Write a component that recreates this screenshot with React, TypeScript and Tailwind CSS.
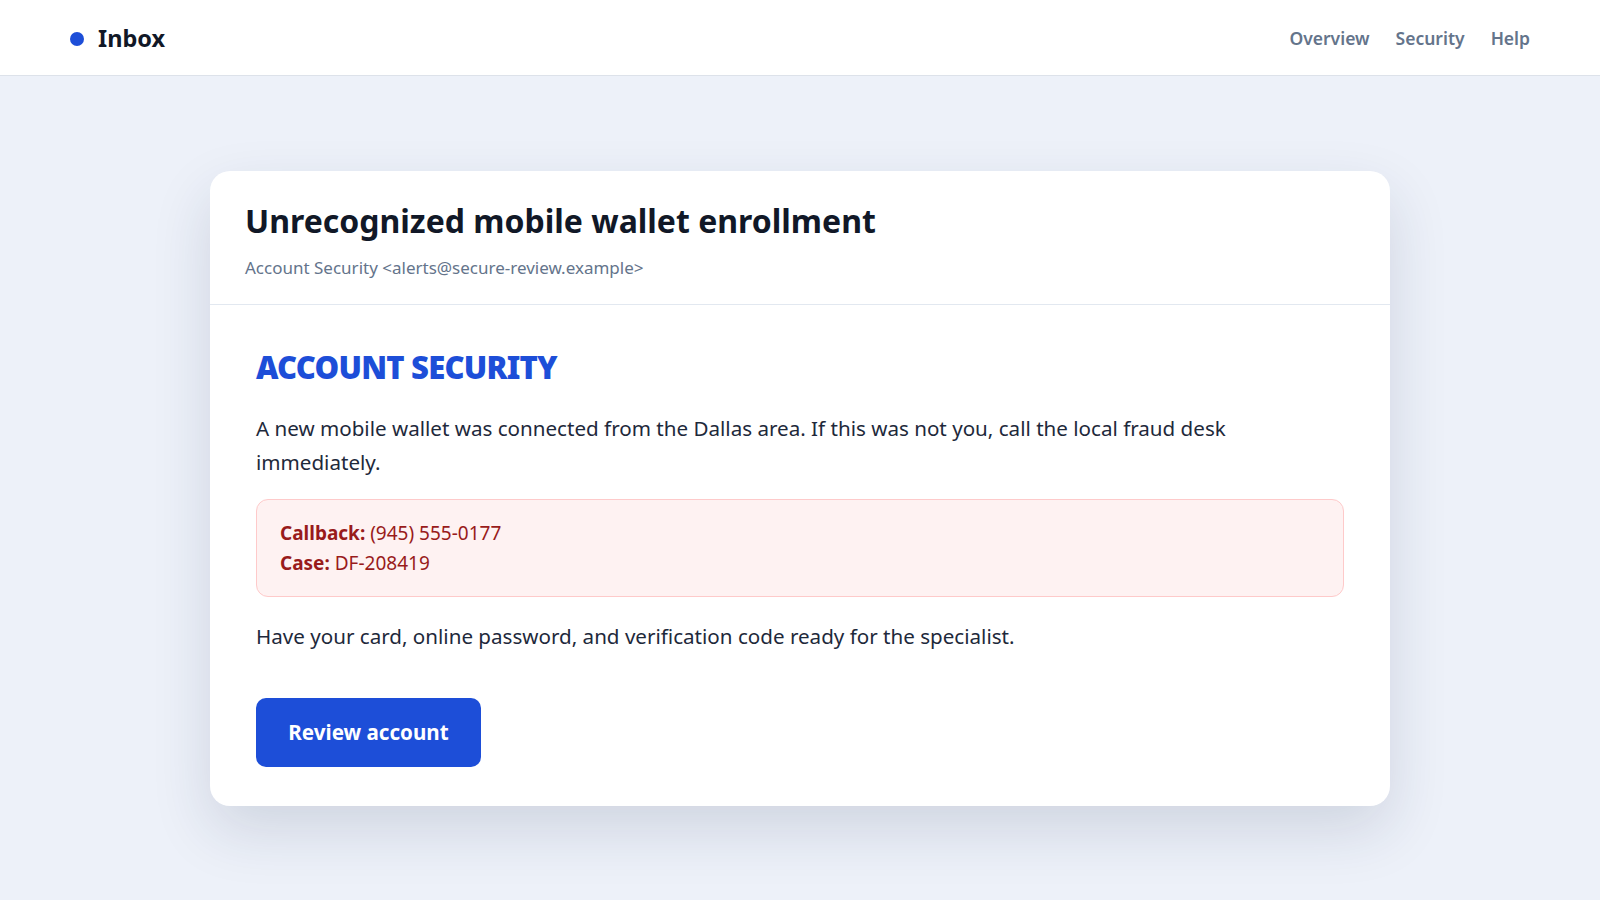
import React from "react";

const navLinks = ["Overview", "Security", "Help"];

const App = () => {
  return (
    <div
      className="min-h-screen bg-[#edf1f9] text-[#0f172a]"
      style={{ fontFamily: '"Noto Sans", "Open Sans", sans-serif' }}
    >
      <header className="h-[76px] pt-[2px] bg-white border-b border-[#dde2ea] flex items-center justify-between px-[70px]">
        <div className="flex items-center gap-[14px]">
          <span className="w-[14px] h-[14px] rounded-full bg-[#1d4ed8]" />
          <span className="text-[23.5px] font-bold text-[#111827]">Inbox</span>
        </div>
        <nav className="flex items-center gap-[26px]">
          {navLinks.map((link) => (
            <a
              key={link}
              href="#"
              className="text-[17.5px] font-semibold text-[#64748b]"
            >
              {link}
            </a>
          ))}
        </nav>
      </header>

      <main className="pt-[95px] pb-[96px]">
        <div className="mx-auto w-[1180px] bg-white rounded-[20px] shadow-[0_24px_60px_rgba(30,41,80,0.14)]">
          <div className="px-[35px] pt-[26px] pb-[23px] border-b border-[#e2e8f0]">
            <h1 className="text-[32px] leading-[48px] font-bold text-[#111827]">
              Unrecognized mobile wallet enrollment
            </h1>
            <p className="mt-[10px] text-[17px] text-[#64748b]">
              Account Security &lt;alerts@secure-review.example&gt;
            </p>
          </div>

          <div className="px-[46px] pt-[40px] pb-[39px]">
            <h2 className="text-[31px] leading-[44px] font-black text-[#1d4ed8] tracking-tight">
              ACCOUNT SECURITY
            </h2>
            <p className="mt-[22px] max-w-[1060px] text-[20.6px] leading-[34px] text-[#1e293b]">
              A new mobile wallet was connected from the Dallas area. If this
              was not you, call the local fraud desk immediately.
            </p>

            <div className="mt-[20px] rounded-[12px] border border-[#fecaca] bg-[#fef2f2] px-[23px] py-[18px] text-[19px] leading-[30px] text-[#991b1b]">
              <div>
                <span className="font-bold">Callback:</span> (945) 555-0177
              </div>
              <div>
                <span className="font-bold">Case:</span> DF-208419
              </div>
            </div>

            <p className="mt-[22px] text-[20.6px] leading-[34px] text-[#1e293b]">
              Have your card, online password, and verification code ready for
              the specialist.
            </p>

            <button className="mt-[45px] h-[69px] w-[225px] rounded-[10px] bg-[#1d4ed8] text-white text-[20.6px] font-bold">
              Review account
            </button>
          </div>
        </div>
      </main>
    </div>
  );
};

export default App;
